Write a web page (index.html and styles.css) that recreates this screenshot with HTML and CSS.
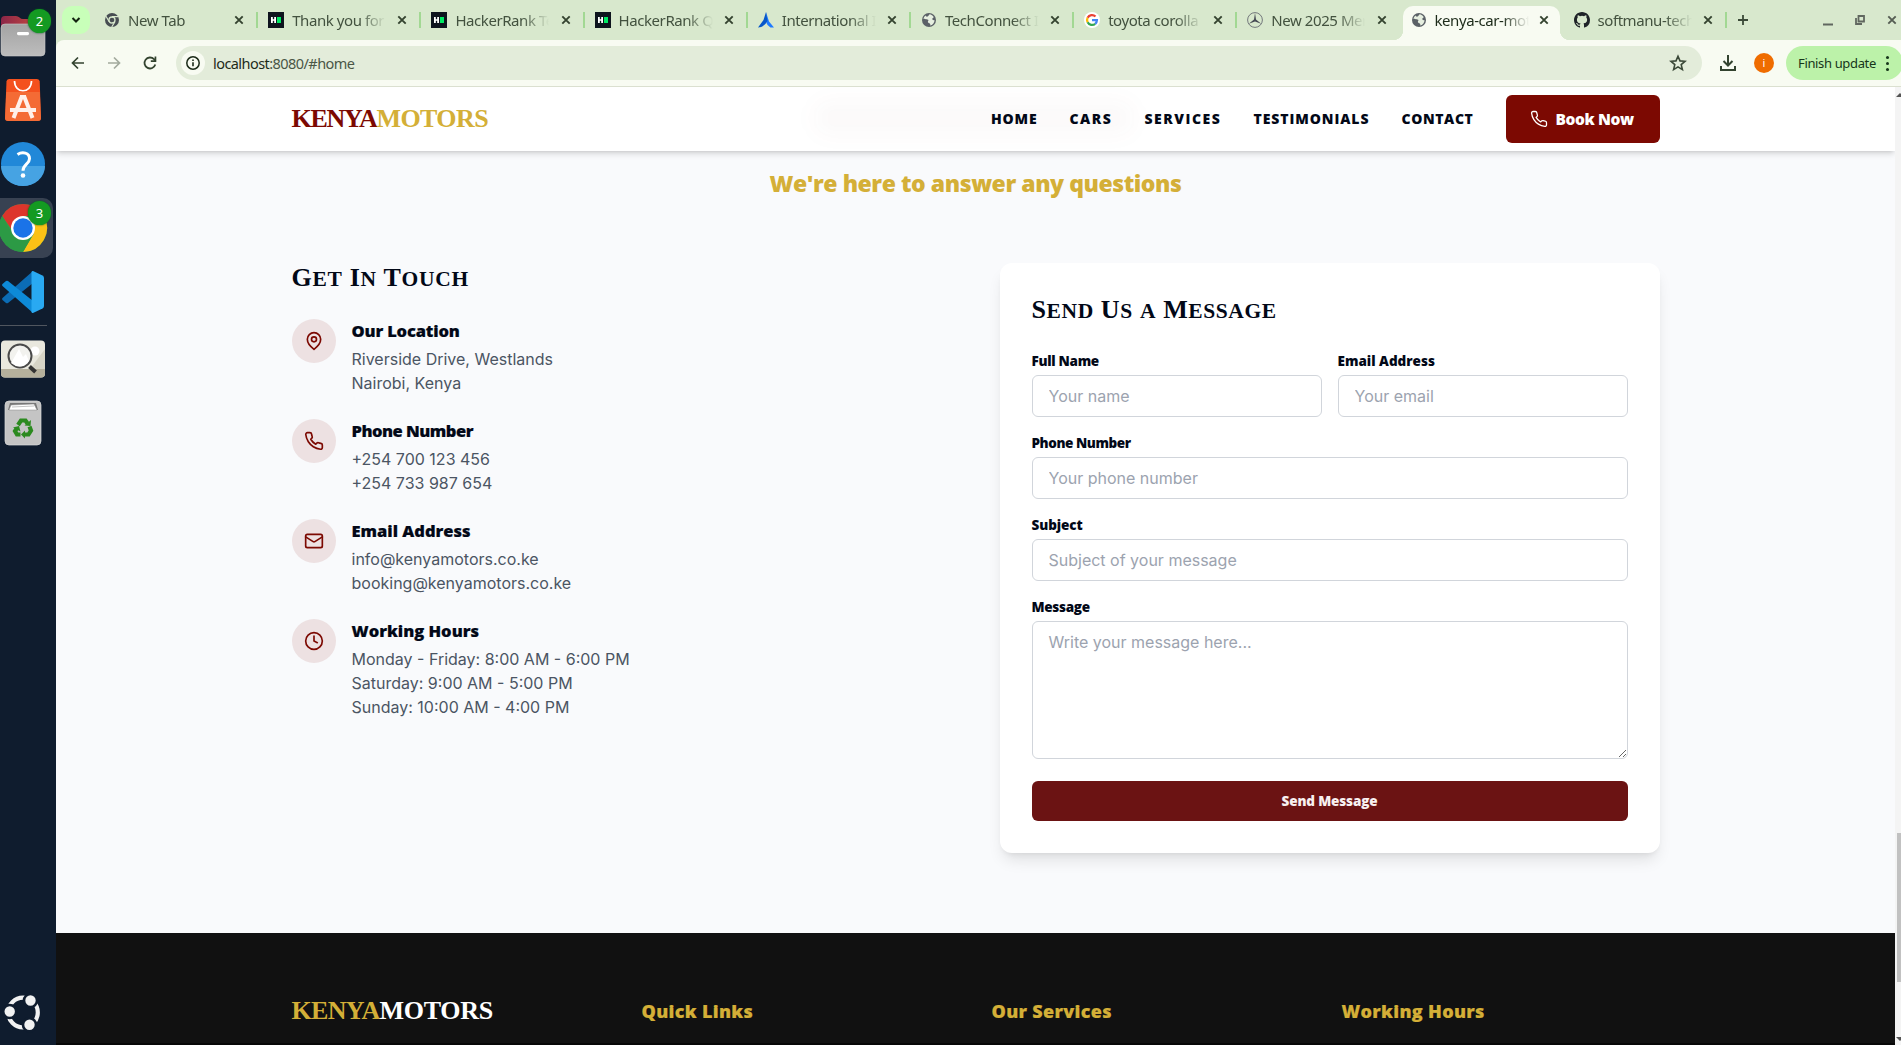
FILE: index.html
```html
<!DOCTYPE html>
<html lang="en">
<head>
<meta charset="utf-8">
<title>kenya-car-motors</title>
<link rel="stylesheet" href="styles.css">
</head>
<body>
<svg class="defs" width="0" height="0">
  <symbol id="x" viewBox="0 0 10 10"><path d="M1.3 1.3l7.4 7.4M8.7 1.3L1.3 8.7" stroke="currentColor" stroke-width="1.9" fill="none"/></symbol>
  <symbol id="hr" viewBox="0 0 16 16"><path fill="#0e141e" d="M0 0h16v16H0z"/><path fill="#fff" d="M3 5h1.8v2.2h1.4V5H8v6H6.2V8.8H4.800V11H3z"/><path fill="#00ea64" d="M9 5h4v6H9z"/></symbol>
  <symbol id="globe" viewBox="0 0 16 16"><circle cx="8" cy="8" r="7" fill="#5b6167"/><path fill="#e6efe0" d="M8.600 2.300c1.600.2 3.300 1.300 4.200 2.900-1 .4-1.700 1.300-1.500 2.100.3.900 1.300.900 2.300.900-.1 2.600-2 4.900-4.500 5.400.5-1.100.2-2-.7-2.400-1-.3-1.700-.7-1.500-1.700.2-.8.700-.9.500-1.500-.3-.6-1.500-.3-2.500-.8-.8-.4-1.300-.6-2.500-.400.300-1.400 1-2.500 2-3.300.4 1 1.300 1.400 2.300 1 .9-.4.9-1.300 1.900-2.200z"/></symbol>
  <symbol id="phone" viewBox="0 0 24 24"><path fill="none" stroke="currentColor" stroke-linecap="round" stroke-linejoin="round" d="M22 16.920v3a2 2 0 0 1-2.180 2 19.790 19.790 0 0 1-8.630-3.070 19.500 19.500 0 0 1-6-6 19.790 19.790 0 0 1-3.070-8.670A2 2 0 0 1 4.110 2h3a2 2 0 0 1 2 1.720 12.840 12.840 0 0 0 .7 2.810 2 2 0 0 1-.45 2.110L8.090 9.910a16 16 0 0 0 6 6l1.270-1.270a2 2 0 0 1 2.110-.45 12.840 12.840 0 0 0 2.810.7A2 2 0 0 1 22 16.920z"/></symbol>
</svg>

<aside class="dock">
  <div class="slot">
    <svg width="56" height="64" viewBox="0 4 56 64">
      <defs><linearGradient id="fg" x2="0" y2="1"><stop stop-color="#a3a3a3"/><stop offset="1" stop-color="#bdbdbd"/></linearGradient><linearGradient id="fr"><stop stop-color="#8b2648"/><stop offset="1" stop-color="#d2503f"/></linearGradient></defs>
      <path fill="url(#fr)" d="M1 30V20q0-4 4-4h11q2 0 3.500 1.500T23 19h18q4 0 4 4v10H1z"/>
      <rect x="1" y="24" width="44" height="32" rx="4" fill="url(#fg)" stroke="#c9c9c9" stroke-width=".6"/>
      <rect x="17" y="32" width="12" height="3.200" rx="1.400" fill="#fff"/>
    </svg>
    <span class="badge">2</span>
  </div>
  <div class="slot">
    <svg width="56" height="64" viewBox="0 68 56 64">
      <path fill="#f4511e" d="M9 79h28q2.500 0 2.700 2.500L41 118q0 3-3 3H8q-3 0-3-3l1.500-36.500Q6.700 79 9 79z"/>
      <path fill="#f4743e" d="M6.300 92h33.500L41 118q0 3-3 3H8q-3 0-3-3z" opacity=".75"/>
      <path d="M14.500 81c0 13 17 13 17 0" fill="none" stroke="#fff" stroke-width="1.700"/>
      <path d="M22 96l-8.500 22M24 96l8.500 22M10 110h26" fill="none" stroke="#fff0ea" stroke-width="4"/><path fill="#fff0ea" d="M20 95h6v4h-6z"/>
    </svg>
  </div>
  <div class="slot">
    <svg width="56" height="64" viewBox="0 132 56 64">
      <circle cx="23" cy="164" r="22" fill="#2188d8"/><path d="M1 166a22 20 0 0 0 44 0z" fill="#46a3e3"/>
      <path d="M17.500 154.500c5-3.200 12-1.800 12 4.200 0 5.300-6.500 5.800-6.500 12" fill="none" stroke="#fff" stroke-width="3"/><circle cx="23" cy="175.500" r="2.300" fill="#fff"/>
    </svg>
  </div>
  <div class="slot slot-active">
    <svg width="56" height="64" viewBox="0 196 56 64">
      <circle cx="23" cy="228" r="24" fill="#34a04c"/>
      <path fill="#dd352c" d="M2.200 216A24 24 0 0 1 43.800 216H23l-9 17z"/>
      <path fill="#fbc116" d="M43.800 216A24 24 0 0 1 23 252l10.500-18L30 216z"/>
      <path fill="#2c9a45" d="M2.200 216l10.400 18L33.400 234 23 252A24 24 0 0 1 2.200 216z"/>
      <circle cx="23" cy="228" r="12" fill="#fff"/><circle cx="23" cy="228" r="9.700" fill="#1a73e8"/>
    </svg>
    <span class="badge">3</span>
  </div>
  <div class="slot">
    <svg width="56" height="64" viewBox="0 260 56 64">
      <path fill="#0b6cb5" d="M33 271v12L8 303q-1 .7-2 0l-3.500-3q-1-1 0-2z"/>
      <path fill="#0d8ad8" d="M33 313v-12L8 281q-1-.7-2 0l-3.500 3q-1 1 0 2z"/>
      <path fill="#29a9f2" d="M33 271l9.500 4.500q1.500.8 1.500 2.500v28q0 1.700-1.500 2.500L33 313q-1.500.3-1.500-1.500v-39q0-1.800 1.500-1.500z"/>
    </svg>
  </div>
  <hr class="dock-rule">
  <div class="slot">
    <svg width="56" height="64" viewBox="0 327 56 64">
      <rect x="1" y="340.500" width="44" height="37" rx="4" fill="#e9e8de"/><path fill="#d6d4c6" d="M30 369l15-20v20z"/><path fill="#b5b09c" d="M1 369h44v4.500q0 4-4 4H5q-4 0-4-4z"/>
      <circle cx="35" cy="351" r="4.500" fill="#fff"/><circle cx="20" cy="356" r="11.500" fill="#f2f2ee" stroke="#4a4a4a" stroke-width="2"/><path fill="#fff" d="M11 363l8-14 4 8 3-3 3 7q-8 10-18 2z"/>
      <path d="M29.500 366.500l6 5.500" stroke="#333" stroke-width="4"/>
    </svg>
  </div>
  <div class="slot">
    <svg width="56" height="64" viewBox="0 391 56 64">
      <rect x="5" y="401" width="36" height="44" rx="4" fill="#c4c4c4" stroke="#ddd" stroke-width=".7"/><path fill="#777" d="M10 403h26l2 7H8z"/><path fill="#fff" stroke="#888" stroke-width=".5" d="M11 405l23-1 3 6H9z"/><path stroke="#999" stroke-width=".6" fill="none" d="M12 407l22-1"/>
      <g fill="none" stroke="#2b8a1f" stroke-width="4.200"><path d="M18 425l3-4.500h4.500l2 3"/><path d="M29.500 426.500l1.500 4-2.500 4H24"/><path d="M20.500 434.500h-3.500l-2-3.500 2-3"/></g>
      <path fill="#2b8a1f" d="M24.500 425.500l6 .5.500-6zM25 430.500v8l-4-4zM13 427.500l6-1.500 1.500 5.500z"/>
    </svg>
  </div>
  <div class="slot slot-end">
    <svg width="56" height="64" viewBox="0 981 56 64">
      <circle cx="23" cy="1012.500" r="14.800" fill="none" stroke="#f2f2f2" stroke-width="4.200"/>
      <g fill="#f2f2f2" stroke="#0f1c2e" stroke-width="2.600"><circle cx="9.700" cy="1011.500" r="6.500"/><circle cx="30.500" cy="1000.500" r="6.500"/><circle cx="29.500" cy="1024.700" r="6.500"/></g>
    </svg>
  </div>
</aside>

<div class="browser">
  <div class="tabs">
    <div class="chev"><svg width="12" height="12" viewBox="0 0 12 12"><path d="M2.500 4L6 7.500 9.500 4" stroke="#12230f" stroke-width="2" fill="none"/></svg></div>
    <div class="tab first"><svg class="fav" viewBox="0 0 16 16"><circle cx="8" cy="8" r="7" fill="#474d52"/><circle cx="8" cy="8" r="3" fill="#474d52" stroke="#d8e8cd" stroke-width="1.300"/><path d="M8 4.700h6.500M5.200 9.700L2 4.200M10.900 9.700L7.700 15" stroke="#d8e8cd" stroke-width="1.200"/></svg><span class="tt">New Tab</span><svg class="cl"><use href="#x"/></svg></div>
    <div class="tab"><svg class="fav"><use href="#hr"/></svg><span class="tt">Thank you for</span><svg class="cl"><use href="#x"/></svg></div>
    <div class="tab"><svg class="fav"><use href="#hr"/></svg><span class="tt">HackerRank Te</span><svg class="cl"><use href="#x"/></svg></div>
    <div class="tab"><svg class="fav"><use href="#hr"/></svg><span class="tt">HackerRank Q</span><svg class="cl"><use href="#x"/></svg></div>
    <div class="tab"><svg class="fav" viewBox="0 0 16 16"><path fill="#1f7bff" d="M8 0l3 9.500L16 15.500h-3.500Q9 13.500 8.500 11z"/><path fill="#0757c9" d="M8 0l1.500 9Q6 15.500 0 15.500L5.500 8z"/></svg><span class="tt">International I</span><svg class="cl"><use href="#x"/></svg></div>
    <div class="tab"><svg class="fav"><use href="#globe"/></svg><span class="tt">TechConnect I</span><svg class="cl"><use href="#x"/></svg></div>
    <div class="tab"><svg class="fav" viewBox="0 0 16 16"><circle cx="8" cy="8" r="8" fill="#fff"/><g fill="none" stroke-width="2.300"><path stroke="#ea4335" d="M11.500 4.500A5 5 0 0 0 3.600 5.700"/><path stroke="#fbbc05" d="M3.600 5.700a5 5 0 0 0 0 4.600"/><path stroke="#34a853" d="M3.600 10.300a5 5 0 0 0 7.600 1.500"/><path stroke="#4285f4" d="M11.200 11.800A5 5 0 0 0 12.900 8.200H8"/></g></svg><span class="tt">toyota corolla</span><svg class="cl"><use href="#x"/></svg></div>
    <div class="tab"><svg class="fav" viewBox="0 0 16 16"><circle cx="8" cy="8" r="7.400" fill="none" stroke="#73787c" stroke-width="1"/><path fill="#474b55" d="M8 1l1 6.600 5.200 4.200L8 9.400l-6.200 2.400L7 7.600z"/></svg><span class="tt">New 2025 Mer</span><svg class="cl"><use href="#x"/></svg></div>
    <div class="tab active"><svg class="fav"><use href="#globe"/></svg><span class="tt">kenya-car-mot</span><svg class="cl"><use href="#x"/></svg></div>
    <div class="tab last"><svg class="fav" viewBox="0 0 16 16"><path fill="#1f2328" d="M8 0C3.580 0 0 3.580 0 8c0 3.540 2.290 6.530 5.470 7.590.4.070.55-.17.55-.38 0-.19-.01-.82-.01-1.490-2.010.37-2.530-.49-2.690-.94-.09-.23-.48-.94-.82-1.130-.28-.15-.68-.52-.01-.53.63-.01 1.080.58 1.230.82.72 1.210 1.870.87 2.330.66.07-.52.28-.87.51-1.070-1.780-.2-3.640-.89-3.640-3.950 0-.87.31-1.590.82-2.150-.08-.2-.36-1.020.08-2.120 0 0 .67-.21 2.200.82a7.600 7.600 0 0 1 4 0c1.530-1.040 2.200-.82 2.200-.82.44 1.100.16 1.920.08 2.120.51.56.82 1.270.82 2.150 0 3.070-1.870 3.750-3.650 3.950.29.25.54.73.54 1.480 0 1.070-.01 1.930-.01 2.200 0 .21.150.46.55.38A8.010 8.010 0 0 0 16 8c0-4.420-3.580-8-8-8z"/></svg><span class="tt">softmanu-tech</span><svg class="cl"><use href="#x"/></svg></div>
    <svg class="plus" width="12" height="12" viewBox="0 0 12 12"><path d="M6 1v10M1 6h10" stroke="#3b4a38" stroke-width="1.800"/></svg>
    <div class="wins">
      <svg width="10" height="14" viewBox="0 0 10 14"><path d="M0 11.500h10" stroke="#60675f" stroke-width="2"/></svg>
      <svg width="10" height="12" viewBox="0 0 10 12"><path d="M3.500 2h5.500v5.500H3.500zM1 4v6h6" fill="none" stroke="#60675f" stroke-width="1.800"/></svg>
      <svg width="10" height="10"><use href="#x"/></svg>
    </div>
  </div>
  <div class="toolbar">
    <div class="navs">
      <svg width="16" height="16" viewBox="0 0 16 16"><path d="M14 8H3M8 2.500L2.500 8 8 13.500" fill="none" stroke="#33432f" stroke-width="1.700"/></svg>
      <svg width="16" height="16" viewBox="0 0 16 16"><path d="M2 8h11M8 2.500L13.500 8 8 13.500" fill="none" stroke="#a2aa9d" stroke-width="1.700"/></svg>
      <svg width="16" height="16" viewBox="0 0 16 16"><path d="M13.300 9.500A5.500 5.500 0 1 1 12 4.200L13.500 6" fill="none" stroke="#33432f" stroke-width="1.800"/><path fill="#33432f" d="M14.300 1.500V7H8.800V5.300h3.800V1.500z"/></svg>
    </div>
    <div class="omni">
      <span class="info"><svg width="16" height="16" viewBox="0 0 16 16"><circle cx="8" cy="8" r="6.200" fill="none" stroke="#1b2a18" stroke-width="1.500"/><path d="M8 7.200v4M8 4.500v1.600" stroke="#1b2a18" stroke-width="1.600"/></svg></span>
      <span class="url"><b>localhost</b>:8080/#home</span>
      <svg class="star" width="18" height="18" viewBox="0 0 18 18"><path d="M9 2.200l2 4.700 5 .4-3.800 3.300 1.200 5L9 12.900l-4.400 2.700 1.200-5L2 7.300l5-.4z" fill="none" stroke="#3a4837" stroke-width="1.600"/></svg>
    </div>
    <svg class="dl" width="16" height="16" viewBox="0 0 16 16"><path d="M8 0v10M3.500 6L8 10.500 12.500 6M1 11v4h14v-4" fill="none" stroke="#33432f" stroke-width="2"/></svg>
    <span class="avatar">i</span>
    <div class="finish"><span>Finish update</span><i></i></div>
  </div>

  <div class="view">
    <div class="page">
      <header class="site">
        <span class="ghost"></span>
        <div class="wrap bar">
          <div class="logo"><span class="k">KENYA</span><span class="o">MOTORS</span></div>
          <nav><a class="n1">HOME</a><a class="n2">CARS</a><a class="n3">SERVICES</a><a class="n4">TESTIMONIALS</a><a class="n5">CONTACT</a>
            <button class="book"><svg width="18" height="18"><use href="#phone"/></svg><span>Book Now</span></button></nav>
        </div>
      </header>
      <section class="contact">
        <p class="lead"><span>We're here to answer any questions</span></p>
        <div class="wrap cols">
          <div class="left">
            <h2>G<small>et</small> I<small>n</small> T<small>ouch</small></h2>
            <div class="item"><div class="ic"><svg width="20" height="20" viewBox="0 0 24 24"><path d="M20 10c0 6-8 12-8 12s-8-6-8-12a8 8 0 0 1 16 0z"/><circle cx="12" cy="10" r="3"/></svg></div><div><h3 class="t-loc">Our Location</h3><p>Riverside Drive, Westlands<br>Nairobi, Kenya</p></div></div>
            <div class="item"><div class="ic"><svg width="20" height="20"><use href="#phone"/></svg></div><div><h3 class="t-phone">Phone Number</h3><p>+254 700 123 456<br>+254 733 987 654</p></div></div>
            <div class="item"><div class="ic"><svg width="20" height="20" viewBox="0 0 24 24"><rect x="2" y="4" width="20" height="16" rx="2"/><path d="M22 7l-8.970 5.700a1.940 1.940 0 0 1-2.060 0L2 7"/></svg></div><div><h3>Email Address</h3><p>info@kenyamotors.co.ke<br>booking@kenyamotors.co.ke</p></div></div>
            <div class="item"><div class="ic"><svg width="20" height="20" viewBox="0 0 24 24"><circle cx="12" cy="12" r="10"/><path d="M12 6v6l4 2"/></svg></div><div><h3>Working Hours</h3><p>Monday - Friday: 8:00 AM - 6:00 PM<br>Saturday: 9:00 AM - 5:00 PM<br>Sunday: 10:00 AM - 4:00 PM</p></div></div>
          </div>
          <form class="card">
            <h2>S<small>end</small> U<small>s</small> <small>a</small> M<small>essage</small></h2>
            <div class="two">
              <div><label>Full Name</label><input placeholder="Your name"></div>
              <div><label class="l-email">Email Address</label><input placeholder="Your email"></div>
            </div>
            <div><label class="l-phone">Phone Number</label><input placeholder="Your phone number"></div>
            <div><label class="l-subject">Subject</label><input placeholder="Subject of your message"></div>
            <div><label>Message</label><textarea placeholder="Write your message here..."></textarea></div>
            <button class="send" type="button">Send Message</button>
          </form>
        </div>
      </section>
      <footer><div class="wrap foot">
        <div class="logo flogo"><span class="k">KENYA</span><span class="o">MOTORS</span></div>
        <h4>Quick Links</h4><h4>Our Services</h4><h4>Working Hours</h4>
      </div></footer>
    </div>
    <div class="scroll"><i class="up"></i><i class="thumb"></i><i class="down"></i></div>
  </div>
</div>
</body>
</html>
```
FILE: styles.css
```css
* { box-sizing: border-box; }
body { margin: 0; width: 1901px; height: 1045px; display: flex; overflow: hidden; font-family: Inter, sans-serif; color: #020817; }
svg { display: block; flex: none; }
.defs { position: absolute; }
h2, h3, h4, p { margin: 0; }
button { border: 0; padding: 0; font: inherit; }

.dock { width: 56px; flex: none; height: 1045px; padding-top: 4px; background: #0f1c2e; display: flex; flex-direction: column; }
.slot { position: relative; height: 64px; flex: none; }
.slot-active::before { content: ""; position: absolute; left: 0; top: 2px; width: 53px; height: 60px; background: #384252; border-radius: 0 10px 10px 0; }
.slot svg { position: relative; }
.slot-end { margin-top: auto; }
.badge { position: absolute; left: 28px; top: 5px; width: 23px; height: 24px; border-radius: 12px; background: #149a22; box-shadow: 0 0 2px #052; color: #fff; font: 13px/24px "Noto Sans", sans-serif; text-align: center; }
.dock-rule { width: 47px; height: 1px; margin: 1px 0; border: 0; background: #50565f; flex: none; }

.browser { flex: 1; min-width: 0; display: flex; flex-direction: column; background: #d8e8cd; }
.tabs { height: 40px; flex: none; display: flex; align-items: center; padding-left: 6px; font: 15px/20px "Noto Sans", sans-serif; color: #43523f; }
.chev { width: 28px; height: 28px; border-radius: 10px; background: #c8ffb9; display: grid; place-items: center; margin-right: 4px; }
.tab { width: 163.200px; height: 34px; margin-top: 6px; padding: 0 13px 6px 11px; display: flex; align-items: center; position: relative; flex: none; }
.tab::before { content: ""; position: absolute; left: -1px; top: 6px; width: 2px; height: 16px; background: #a2d893; }
.tab.first::before, .tab.active::before, .tab.last::before { display: none; }
.fav { width: 16px; height: 16px; margin-right: 8px; }
.first .fav { margin-left: -1px; margin-right: 8px; }
.tt { width: 96px; overflow: hidden; white-space: nowrap; letter-spacing: -.43px; padding-bottom: 1px; -webkit-mask-image: linear-gradient(90deg, #000 70%, transparent 98%); mask-image: linear-gradient(90deg, #000 70%, transparent 98%); }
.cl { width: 10px; height: 10px; margin-left: auto; color: #34432f; }
.active { background: #f8fbf2; border-radius: 10px 10px 0 0; width: 157px; margin-left: 3px; margin-right: 3px; padding-left: 8px; padding-right: 11px; color: #1d2b1a; }
.active::after { content: ""; position: absolute; left: -10px; right: -10px; bottom: 0; height: 10px; background: radial-gradient(circle at 0 0, transparent 10px, #f8fbf2 10.500px) left / 10px 10px no-repeat, radial-gradient(circle at 100% 0, transparent 10px, #f8fbf2 10.500px) right / 10px 10px no-repeat; }
.last::after { content: ""; position: absolute; right: -1px; top: 6px; width: 2px; height: 16px; background: #a2d893; }
.plus { margin-left: 11px; }
.wins { margin-left: auto; padding-right: 4px; display: flex; align-items: center; gap: 22px; color: #555d53; }

.toolbar { height: 46px; flex: none; background: #f8fbf2; border-radius: 8px 0 0 0; display: flex; align-items: center; color: #1d2b1a; font-family: "Noto Sans", sans-serif; }
.navs { display: flex; gap: 20px; padding-left: 14px; }
.omni { margin-left: 18px; width: 1526px; height: 34px; border-radius: 17px; background: #e3ecda; display: flex; align-items: center; padding: 0 15px 0 5px; font-size: 14.500px; flex: none; }
.info { width: 24px; height: 24px; border-radius: 12px; background: #f8fbf2; display: grid; place-items: center; margin-right: 8px; }
.url { color: #4a5646; letter-spacing: -.56px; padding-bottom: 1px; }
.url b { font-weight: 400; color: #1d2b1a; }
.star { margin-left: auto; }
.dl { margin-left: 18px; }
.avatar { width: 20px; height: 20px; border-radius: 10px; background: #ef6c00; color: #fff; font-size: 11px; line-height: 20px; text-align: center; margin-left: 18px; flex: none; }
.finish { width: 117px; height: 34px; margin-left: 12px; margin-right: -2px; flex: none; border-radius: 17px; background: #bcf2a9; display: flex; align-items: center; padding-left: 12px; font-size: 13px; letter-spacing: -.35px; white-space: nowrap; color: #16351a; }
.finish i { width: 3px; height: 3px; border-radius: 2px; background: currentColor; box-shadow: 0 -6px, 0 6px; margin-left: 10px; }

.view { flex: 1; min-height: 0; display: flex; border-top: 1px solid #dbe0d0; }
.page { width: 1839px; height: 958px; background: #f9fafc; overflow: hidden; }
.scroll { flex: 1; background: #f4f4f4; display: flex; flex-direction: column; align-items: flex-end; overflow: hidden; }
.up { border: 4px solid transparent; border-bottom: 4px solid #555; border-top: 0; margin: 6px -3px 0 0; }
.thumb { width: 4px; height: 149px; margin-top: 736px; background: #c1c1c1; }
.down { border: 4px solid transparent; border-top: 4px solid #555; border-bottom: 0; margin: auto -3px 4px 0; }
.wrap { width: 1368px; margin: 0 auto; }

.site { height: 64px; position: relative; background: #fff; box-shadow: 0 4px 6px -1px rgba(0,0,0,.13), 0 2px 4px -2px rgba(0,0,0,.13); }
.ghost { position: absolute; left: 758px; top: 14px; width: 320px; height: 34px; border-radius: 16px; background: rgba(120,40,20,.028); filter: blur(10px); }
.bar { height: 64px; display: flex; align-items: center; justify-content: space-between; position: relative; }
.logo { font: 700 26px/32px "Liberation Serif", serif; display: flex; }
.logo .k { color: #7c0902; letter-spacing: -1.300px; }
.logo .o { color: #d4af37; letter-spacing: -.6px; }
nav { display: flex; align-items: center; gap: 32px; font: 800 14px/20px "Open Sans", sans-serif; letter-spacing: .62px; }
.n1 { letter-spacing: .85px; }
.n2, .n3 { letter-spacing: 1.540px; }
.n4 { letter-spacing: .93px; }
.book { width: 154px; height: 48px; border-radius: 6px; background: #7c0902; color: #fff; display: flex; align-items: center; padding-left: 24px; gap: 8px; font: 800 15.500px/24px "Open Sans", sans-serif; letter-spacing: -.4px; white-space: nowrap; }
.book svg { stroke-width: 1.700; }

.lead { padding-top: 16px; height: 112px; text-align: center; font: 800 23px/32px "Open Sans", sans-serif; letter-spacing: -.45px; color: #d4af37; }
.cols { display: flex; gap: 48px; height: 670px; align-items: flex-start; }
.left, .card { width: 660px; }
h2 { font: 700 26px/30px "Liberation Serif", serif; height: 32px; letter-spacing: .7px; margin-bottom: 24px; white-space: nowrap; }
h2 small { font-size: 21.500px; text-transform: uppercase; }
.item { display: flex; gap: 16px; margin-bottom: 24px; color: #4b5563; font-size: 16px; line-height: 24px; }
.ic { width: 44px; height: 44px; border-radius: 50%; background: #ede1e2; display: grid; place-items: center; color: #7c0902; fill: none; stroke: #7c0902; stroke-width: 2; stroke-linecap: round; stroke-linejoin: round; }
h3 { font: 800 16.500px/24px "Open Sans", sans-serif; color: #020817; margin-bottom: 4px; -webkit-text-stroke: .2px; }
.t-loc { letter-spacing: -.150px; }
.t-phone { letter-spacing: -.5px; }
.card { height: 590px; background: #fff; border-radius: 12px; padding: 32px; box-shadow: 0 10px 15px -3px rgba(0,0,0,.1), 0 4px 6px -4px rgba(0,0,0,.1); display: flex; flex-direction: column; gap: 16px; }
.card h2 { margin-bottom: 8px; letter-spacing: .6px; }
.two { display: grid; grid-template-columns: 1fr 1fr; gap: 16px; }
label { display: block; font: 800 13.500px/20px "Open Sans", sans-serif; letter-spacing: -.3px; margin-bottom: 4px; }
.l-email { letter-spacing: 0; }
.l-phone { letter-spacing: -.43px; }
.l-subject { letter-spacing: -.1px; }
input, textarea { display: block; width: 100%; height: 42px; border: 1px solid #d1d5db; border-radius: 6px; padding: 8px 16px; font: 16px/24px Inter, sans-serif; background: #fff; outline: 0; }
textarea { height: 138px; margin-bottom: 6px; }
::placeholder { color: #9ca3af; opacity: 1; }
.send { height: 40px; flex: none; border-radius: 6px; background: #6b1313; color: #f8f0f0; font: 800 13.500px/20px "Open Sans", sans-serif; letter-spacing: -.150px; }

footer { height: 112px; background: #111; border-bottom: 2px solid #070707; }
.foot { padding-top: 62px; display: grid; grid-template-columns: repeat(4, 1fr); gap: 32px; }
.flogo .k { color: #d4af37; letter-spacing: -.7px; }
.flogo .o { color: #fff; letter-spacing: -.3px; }
h4 { font: 800 18px/32px "Open Sans", sans-serif; letter-spacing: .32px; color: #d4af37; -webkit-text-stroke: .2px; }
```
